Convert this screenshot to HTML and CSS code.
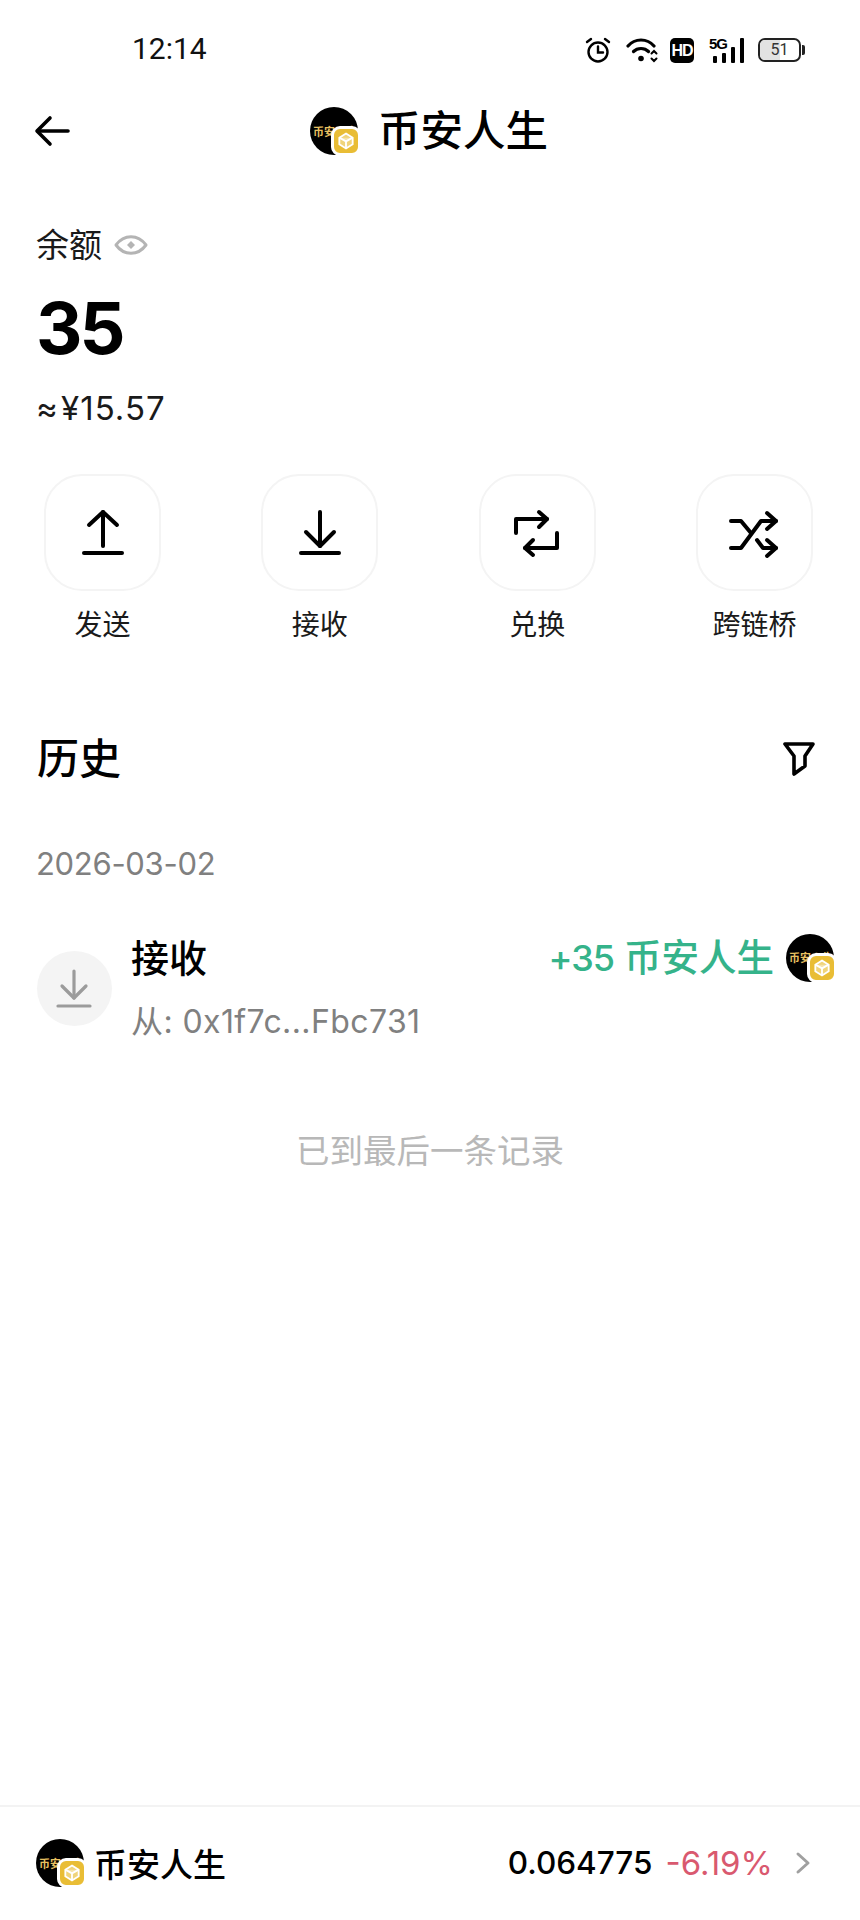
FILE: index.html
```html
<!DOCTYPE html>
<html lang="zh-CN">

<head>
    <meta charset="UTF-8">
    <meta name="viewport" content="width=device-width, initial-scale=1.0">
    <title>币安人生</title>
    <link rel="stylesheet" href="styles.css">
</head>

<body>
    <div class="page">

        <!-- 状态栏 -->
        <div class="statusbar">
            <span class="clock">12:14</span>
            <div class="status-icons">
                <svg class="ic-alarm" width="26" height="26" viewBox="0 0 26 26" fill="none" stroke="#000" stroke-width="2.4" stroke-linecap="round">
                    <circle cx="13" cy="15" r="9.5"/>
                    <path d="M13 9.500V15.500H18"/>
                    <path d="M2 5L6 2M24 5L20 2"/>
                </svg>
                <svg class="ic-wifi" width="32" height="25" viewBox="0 0 32 25" fill="none" stroke="#000" stroke-width="3.2" stroke-linecap="round">
                    <path d="M2 8C9 0 21 0 28 8"/>
                    <path d="M7.500 13.500C11.500 9.500 18.500 9.500 22.500 13.500"/>
                    <circle cx="15" cy="20.500" r="2.800" fill="#000" stroke="none"/>
                    <path d="M25.500 15.500L28 13L30.500 15.500M25.500 20.500L28 23L30.500 20.500" stroke-width="2"/>
                </svg>
                <span class="ic-hd">HD</span>
                <div class="ic-signal">
                    <span class="net">5G</span>
                    <i class="bar b1"></i>
                    <i class="bar b2"></i>
                    <i class="bar b3"></i>
                    <i class="bar b4"></i>
                </div>
                <div class="ic-battery">
                    <div class="cell"><span class="level"></span><span class="num">51</span></div>
                    <i class="cap"></i>
                </div>
            </div>
        </div>

        <!-- 标题 -->
        <div class="topbar">
            <svg class="back" width="40" height="36" viewBox="0 0 40 36" fill="none" stroke="#000" stroke-width="3.6" stroke-linecap="round" stroke-linejoin="round">
                <path d="M35 18H5"/>
                <path d="M17 5L4 18L17 31"/>
            </svg>
            <div class="topbar-title">
                <div class="avatar avatar-top">
                    <div class="coin"><span>币安人生</span></div>
                    <div class="badge">
                        <svg viewBox="0 0 24 24" fill="rgba(255,255,255,0.35)" stroke="#fff" stroke-width="2.2"><path d="M12 3L20 8V16L12 21L4 16V8Z"/><path d="M4 8L12 12.500L20 8M12 12.500V21"/></svg>
                    </div>
                </div>
                <h1>币安人生</h1>
            </div>
        </div>

        <!-- 余额 -->
        <div class="balance">
            <div class="balance-label">
                <span>余额</span>
                <svg width="34" height="24" viewBox="0 0 34 24" fill="none" stroke="#b4b4b4" stroke-width="3" stroke-linejoin="round">
                    <path d="M2 12C10 1 24 1 32 12C24 23 10 23 2 12Z"/>
                    <path d="M17 8L21 12L17 16L13 12Z" fill="#b4b4b4" stroke="none"/>
                </svg>
            </div>
            <div class="balance-num">35</div>
            <div class="balance-cny">≈ ¥15.57</div>
        </div>

        <!-- 操作 -->
        <div class="actions">
            <div class="action">
                <div class="tile">
                    <svg width="56" height="56" viewBox="0 0 56 56" fill="none" stroke="#000" stroke-width="4" stroke-linecap="round" stroke-linejoin="round">
                        <path d="M28 7V41"/>
                        <path d="M14 20L28 7L42 20"/>
                        <path d="M9 48H47"/>
                    </svg>
                </div>
                <span>发送</span>
            </div>
            <div class="action">
                <div class="tile">
                    <svg width="56" height="56" viewBox="0 0 56 56" fill="none" stroke="#000" stroke-width="4" stroke-linecap="round" stroke-linejoin="round">
                        <path d="M28 7V41"/>
                        <path d="M14 27L28 41L42 27"/>
                        <path d="M9 48H47"/>
                    </svg>
                </div>
                <span>接收</span>
            </div>
            <div class="action">
                <div class="tile">
                    <svg width="56" height="56" viewBox="0 0 56 56" fill="none" stroke="#000" stroke-width="4" stroke-linecap="round" stroke-linejoin="round">
                        <path d="M7 28V14H38"/>
                        <path d="M30 7L38 14L30 22"/>
                        <path d="M48 28V43H16"/>
                        <path d="M24 35L16 43L24 50"/>
                    </svg>
                </div>
                <span>兑换</span>
            </div>
            <div class="action">
                <div class="tile">
                    <svg width="56" height="56" viewBox="0 0 56 56" fill="none" stroke="#000" stroke-width="4" stroke-linecap="round" stroke-linejoin="round">
                        <path d="M5 43H15L35 16H50"/>
                        <path d="M41 8L50 16L41 24"/>
                        <path d="M5 16H15L25 28"/>
                        <path d="M31 35L37 43H50"/>
                        <path d="M41 35L50 43L41 51"/>
                    </svg>
                </div>
                <span>跨链桥</span>
            </div>
        </div>

        <!-- 历史 -->
        <div class="history-head">
            <h2>历史</h2>
            <svg width="34" height="36" viewBox="0 0 34 36" fill="none" stroke="#000" stroke-width="3.6" stroke-linejoin="round">
                <path d="M3 3H31L23 15V25L12 33V15Z"/>
            </svg>
        </div>
        <div class="history-date">2026-03-02</div>

        <div class="record">
            <div class="record-icon">
                <svg width="75" height="75" viewBox="0 0 75 75" fill="none" stroke="#9b9b9b" stroke-width="3.2" stroke-linecap="round" stroke-linejoin="round">
                    <path d="M37 20V47"/>
                    <path d="M25 35L37 47L49 35"/>
                    <path d="M21 55H53"/>
                </svg>
            </div>
            <div class="record-text">
                <div class="record-title">接收</div>
                <div class="record-from">从: 0x1f7c...Fbc731</div>
            </div>
            <div class="record-amount">
                <span><span class="plus">+35</span> 币安人生</span>
                <div class="avatar">
                    <div class="coin"><span>币安人生</span></div>
                    <div class="badge">
                        <svg viewBox="0 0 24 24" fill="rgba(255,255,255,0.35)" stroke="#fff" stroke-width="2.2"><path d="M12 3L20 8V16L12 21L4 16V8Z"/><path d="M4 8L12 12.500L20 8M12 12.500V21"/></svg>
                    </div>
                </div>
            </div>
        </div>

        <div class="list-end">已到最后一条记录</div>

        <!-- 底部行情 -->
        <div class="market">
            <div class="avatar">
                <div class="coin"><span>币安人生</span></div>
                <div class="badge">
                    <svg viewBox="0 0 24 24" fill="rgba(255,255,255,0.35)" stroke="#fff" stroke-width="2.2"><path d="M12 3L20 8V16L12 21L4 16V8Z"/><path d="M4 8L12 12.500L20 8M12 12.500V21"/></svg>
                </div>
            </div>
            <span class="market-name">币安人生</span>
            <span class="market-price">0.064775</span>
            <span class="market-change">-6.19%</span>
            <svg class="chevron" width="16" height="24" viewBox="0 0 16 24" fill="none" stroke="#a0a0a0" stroke-width="3" stroke-linecap="round" stroke-linejoin="round">
                <path d="M3 3L13 12L3 21"/>
            </svg>
        </div>

    </div>
</body>

</html>
```

FILE: styles.css
```css
* {
    padding: 0;
    margin: 0;
    box-sizing: border-box;
}

body {
    background-color: #fff;
    color: #000;
    font-family: "Inter", "Noto Sans CJK SC", sans-serif;
}

.page {
    width: 860px;
    height: 1920px;
    display: flex;
    flex-direction: column;
    overflow: hidden;
}

/* status bar */
.statusbar {
    height: 96px;
    flex: none;
    display: flex;
    align-items: center;
    justify-content: space-between;
    padding: 4px 55px 0 132px;
}

.clock {
    margin-bottom: 4px;
    font-family: "Roboto", sans-serif;
    font-size: 30px;
    color: #111;
}

.status-icons {
    display: flex;
    align-items: center;
}

.ic-wifi {
    margin-left: 15px;
}

.ic-hd {
    margin-left: 12px;
    width: 24px;
    height: 25px;
    border-radius: 5px;
    background: #000;
    color: #fff;
    font-family: "Liberation Sans", sans-serif;
    font-size: 16px;
    font-weight: 700;
    line-height: 25px;
    text-align: center;
    letter-spacing: -1px;
}

.ic-signal {
    margin-left: 15px;
    width: 35px;
    height: 25px;
    position: relative;
}

.ic-signal .net {
    position: absolute;
    left: 0;
    top: -2px;
    font-family: "Liberation Sans", sans-serif;
    font-size: 15px;
    font-weight: 700;
    line-height: 15px;
    letter-spacing: -1px;
}

.ic-signal .bar {
    position: absolute;
    bottom: 0;
    width: 4px;
    background: #000;
    border-radius: 1px;
}

.b1 { left: 4px; height: 7px; }
.b2 { left: 13px; height: 10px; }
.b3 { left: 22px; height: 16px; }
.b4 { left: 31px; height: 25px; }

.ic-battery {
    margin-left: 14px;
    display: flex;
    align-items: center;
}

.cell {
    width: 43px;
    height: 24px;
    border: 2px solid #222;
    border-radius: 7px;
    position: relative;
    overflow: hidden;
}

.level {
    position: absolute;
    left: 0;
    top: 0;
    bottom: 0;
    width: 51%;
    background: #e2e2e2;
}

.num {
    position: relative;
    display: block;
    text-align: center;
    font-family: "Roboto", sans-serif;
    font-size: 16px;
    line-height: 20px;
    color: #333;
}

.cap {
    width: 3px;
    height: 10px;
    margin-left: 1px;
    background: #222;
    border-radius: 0 2px 2px 0;
}

/* top bar */
.topbar {
    height: 70px;
    flex: none;
    position: relative;
    display: flex;
    align-items: center;
    justify-content: center;
}

.back {
    position: absolute;
    left: 33px;
    top: 17px;
}

.topbar-title {
    display: flex;
    align-items: center;
    gap: 20px;
    margin-right: 2px;
}

.topbar-title h1 {
    font-size: 42.500px;
    font-weight: 500;
    line-height: 56px;
}

/* token avatar */
.avatar {
    width: 48px;
    height: 48px;
    flex: none;
    position: relative;
}

.coin {
    width: 48px;
    height: 48px;
    border-radius: 50%;
    background: #000;
    overflow: hidden;
    display: flex;
    align-items: center;
    padding-left: 3px;
}

.coin span {
    color: #e8c060;
    font-size: 11px;
    font-weight: 700;
    white-space: nowrap;
}

.badge {
    position: absolute;
    right: -3px;
    bottom: -1px;
    width: 30px;
    height: 30px;
    background: #e9bd35;
    border: 3px solid #fff;
    border-radius: 9px;
    display: flex;
    align-items: center;
    justify-content: center;
}

.badge svg {
    width: 20px;
    height: 20px;
}

/* balance */
.balance {
    margin-top: 57px;
    padding-left: 36px;
    flex: none;
}

.balance-label {
    display: flex;
    align-items: center;
    gap: 12px;
    font-size: 33px;
    line-height: 44px;
    color: #1a1a1a;
}

.balance-num {
    margin-top: 21px;
    font-size: 72px;
    font-weight: 700;
    line-height: 80px;
    letter-spacing: -3px;
}

.balance-cny {
    margin-top: 18px;
    font-size: 33px;
    line-height: 44px;
    letter-spacing: 1px;
    word-spacing: -8px;
    color: #1a1a1a;
}

/* action buttons */
.actions {
    margin-top: 44px;
    padding: 0 47px 0 44px;
    display: flex;
    justify-content: space-between;
    flex: none;
}

.action {
    width: 117px;
    display: flex;
    flex-direction: column;
    align-items: center;
    gap: 14px;
    font-size: 28px;
    line-height: 40px;
    color: #1a1a1a;
    white-space: nowrap;
}

.tile {
    width: 117px;
    height: 117px;
    border: 2px solid #f4f4f4;
    border-radius: 38px;
    display: flex;
    align-items: center;
    justify-content: center;
}

/* history */
.history-head {
    margin-top: 86px;
    padding: 0 44px 0 37px;
    display: flex;
    align-items: center;
    justify-content: space-between;
    flex: none;
}

.history-head h2 {
    font-size: 42px;
    font-weight: 500;
    line-height: 56px;
}

.history-date {
    margin-top: 55px;
    padding-left: 36px;
    font-size: 31px;
    line-height: 44px;
    letter-spacing: -0.3px;
    color: #808080;
    flex: none;
}

.record {
    margin-top: 47px;
    padding: 0 26px 0 37px;
    display: flex;
    align-items: center;
    flex: none;
}

.record-icon {
    width: 75px;
    height: 75px;
    border-radius: 50%;
    background: #f4f4f4;
    flex: none;
}

.record-text {
    margin-left: 19px;
    flex: 1;
}

.record-title {
    font-size: 38px;
    font-weight: 500;
    line-height: 50px;
}

.record-from {
    margin-top: 17px;
    font-size: 32px;
    line-height: 44px;
    letter-spacing: 0.4px;
    color: #808080;
}

.record-amount {
    align-self: flex-start;
    display: flex;
    align-items: center;
    gap: 12px;
    font-size: 37.500px;
    font-weight: 500;
    line-height: 50px;
    color: #35b38a;
}

.plus {
    font-size: 36px;
    letter-spacing: -1px;
}

.list-end {
    margin-top: 85px;
    font-size: 33.500px;
    line-height: 44px;
    color: #b8b8b8;
    text-align: center;
    flex: none;
}

/* bottom market bar */
.market {
    margin-top: auto;
    height: 115px;
    flex: none;
    border-top: 2px solid #f3f3f3;
    padding: 0 49px 2px 36px;
    display: flex;
    align-items: center;
}

.market-name {
    margin-left: 10px;
    font-size: 33px;
    font-weight: 500;
    flex: 1;
}

.market-price {
    font-size: 31.500px;
    font-weight: 500;
}

.market-change {
    margin-left: 13px;
    font-size: 33px;
    color: #d9596f;
}

.chevron {
    margin-left: 22px;
}
```
